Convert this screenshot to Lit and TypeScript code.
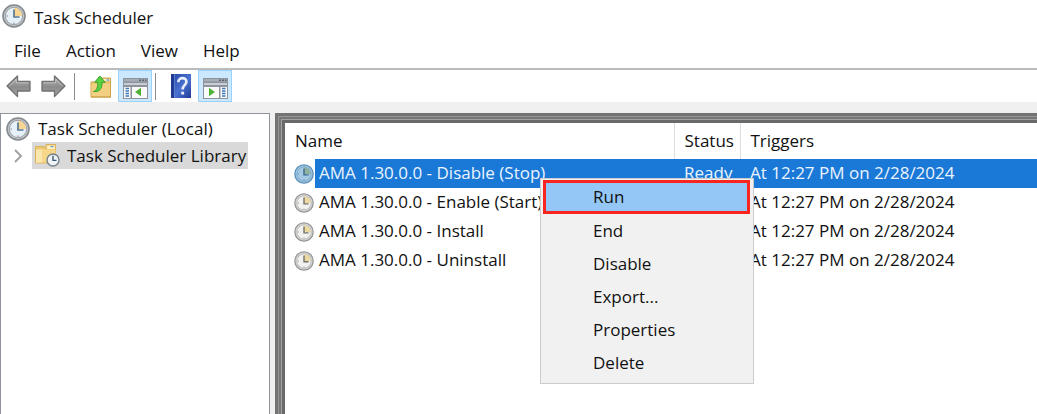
import { LitElement, html, css, svg } from "lit";
import { customElement, property, state } from "lit/decorators.js";
import { classMap } from "lit/directives/class-map.js";

interface Task {
  name: string;
  status: string;
  trigger: string;
}

const TASKS: Task[] = [
  { name: "AMA 1.30.0.0 - Disable (Stop)", status: "Ready", trigger: "At 12:27 PM on 2/28/2024" },
  { name: "AMA 1.30.0.0 - Enable (Start)", status: "Ready", trigger: "At 12:27 PM on 2/28/2024" },
  { name: "AMA 1.30.0.0 - Install", status: "Ready", trigger: "At 12:27 PM on 2/28/2024" },
  { name: "AMA 1.30.0.0 - Uninstall", status: "Ready", trigger: "At 12:27 PM on 2/28/2024" },
];

const COMMANDS = ["Run", "End", "Disable", "Export...", "Properties", "Delete"];

/* Round clock face with the first quarter filled in. */
@customElement("clock-icon")
export class ClockIcon extends LitElement {
  @property({ type: Boolean }) selected = false;
  @property({ type: Boolean }) soft = false;

  static styles = css`
    :host { display: block; }
    svg { display: block; width: 100%; height: 100%; }
  `;

  render() {
    const rim = this.selected ? "#5d8fb5" : this.soft ? "#979797" : "#858a8f";
    const ring = this.selected ? "#a5cdea" : this.soft ? "#dedede" : "#c3c6c8";
    const face = this.selected ? "#a3c9e4" : this.soft ? "#f1f1ef" : "#e6f0f9";
    const quarter = this.selected ? "#8fb29f" : this.soft ? "#ead9a0" : "#f7d593";
    const hand = this.selected ? "#3c6c90" : this.soft ? "#77716a" : "#5b7893";
    return html`<svg viewBox="0 0 24 24" aria-hidden="true">
      <circle cx="12" cy="12" r="11" fill=${ring} stroke=${rim} stroke-width="1.6"></circle>
      <circle cx="12" cy="12" r="8.6" fill=${face} stroke=${rim} stroke-width="0.7"></circle>
      <path d="M12 12V3.8A8.2 8.2 0 0 1 20.2 12Z" fill=${quarter}></path>
      <path d="M12 5.5V13H17.5" fill="none" stroke=${hand} stroke-width="1.7"></path>
      <path d="M12 18.5v1.5M4.5 12H6" stroke=${rim} stroke-width="1"></path>
    </svg>`;
  }
}

const arrow = svg`
  <defs><linearGradient id="steel" x1="0" y1="0" x2="0" y2="1">
    <stop offset="0" stop-color="#b4b4b4"></stop><stop offset="0.55" stop-color="#8b8b8b"></stop><stop offset="1" stop-color="#a9a9a9"></stop>
  </linearGradient></defs>
  <path d="M1 12 11.5 2V7.5H24V17H11.5V22.5Z" fill="url(#steel)" stroke="#707070" stroke-width="1.3" stroke-linejoin="round"></path>
  <path d="M3.5 11.8 10.3 5.3V8.8H22.7" fill="none" stroke="#c9c9c9" stroke-width="0.8"></path>`;

const backIcon = html`<svg width="25" height="24" viewBox="0 0 25 24" aria-hidden="true">${arrow}</svg>`;
const forwardIcon = html`<svg width="25" height="24" viewBox="0 0 25 24" aria-hidden="true"><g transform="translate(25 0) scale(-1 1)">${arrow}</g></svg>`;

const folderUpIcon = html`<svg width="22" height="24" viewBox="0 0 22 24" aria-hidden="true">
  <path d="M1 8H9L11 5V4H20.5V23H1Z" fill="#e8c36f" stroke="#cfa34b" stroke-width="1"></path>
  <path d="M12.5 5H19.5V7H12.5Z" fill="#fff3cf"></path><path d="M16.5 5.3h2.5v1.4h-2.5z" fill="#5b9bd0"></path>
  <path d="M1.5 9.5H20V22.5H1.5Z" fill="#f3d081"></path>
  <path d="M1 23H21" stroke="#c79a42"></path>
  <path d="M3.5 17.5C7 16.5 7.8 13 7.8 8.2H4.8L9.8 2 15.2 8.2H12C12.5 14 9.5 18.5 3.5 17.5Z" fill="#58d143" stroke="#35a32a" stroke-width="1" stroke-linejoin="round"></path>
</svg>`;

/* Console window with a side list; the arrow points towards the tree or the action side. */
const paneIcon = (right: boolean) => html`<svg width="25" height="21" viewBox="0 0 25 21" aria-hidden="true">
  <path d="M0 0H25V21H0Z" fill="#8d949e"></path>
  <path d="M1 1H24V3.5H1Z" fill="#a6adb7"></path>
  <path d="M16 1.5h2v1.5h-2zM19 1.5h2v1.5h-2zM22 1.5h1.5v1.5H22z" fill="#5c6470"></path>
  <path d="M1 5H24V7H1Z" fill="#c9ced5"></path>
  ${right
    ? html`<svg x="0" y="0" width="25" height="21"><path d="M1 9H16V20H1ZM17.5 9H24V20H17.5Z" fill="#fafafa"></path><path d="M6 9.8V18.2L12 14Z" fill="#4fb236"></path><path d="M19 10.5h3.5M19 13h3.5M19 15.5h3.5M19 18h3.5" stroke="#3e78b8" stroke-width="1.3"></path></svg>`
    : html`<svg x="0" y="0" width="25" height="21"><path d="M1 9H7.5V20H1ZM9 9H24V20H9Z" fill="#fafafa"></path><path d="M18 9.8V18.2L12 14Z" fill="#4fb236"></path><path d="M2.5 10.5H6M2.5 13H6M2.5 15.5H6M2.5 18H6" stroke="#3e78b8" stroke-width="1.3"></path></svg>`}
</svg>`;

const helpIcon = html`<svg width="20" height="24" viewBox="0 0 20 24" aria-hidden="true">
  <defs><linearGradient id="book" x1="0" y1="0" x2="1" y2="1">
    <stop offset="0" stop-color="#2445a4"></stop><stop offset="0.55" stop-color="#4a72d0"></stop><stop offset="1" stop-color="#1f3a94"></stop>
  </linearGradient></defs>
  <path d="M0 0H20V24H0Z" fill="url(#book)"></path>
  <path d="M0 0H3V24H0Z" fill="#203c92"></path><path d="M3.5 0V24" stroke="#6485d4" stroke-width="0.8"></path>
  <path d="M7.3 8.2C7.3 2.8 15.6 2.8 15.4 8 15.2 11.2 11.6 11.2 11.6 15.4" fill="none" stroke="#e8eefb" stroke-width="2.6"></path>
  <path d="M10.2 17.7h2.9v2.8h-2.9z" fill="#e8eefb"></path>
</svg>`;

const libraryIcon = html`<svg width="25" height="23" viewBox="0 0 25 23" aria-hidden="true">
  <path d="M0.5 2.5H9L11 5V0.5H20.5V19H0.5Z" fill="#ecc873" stroke="#dab25a"></path>
  <path d="M12 1.5H20V5H12Z" fill="#fff1c4"></path><path d="M15.5 2h3v1.2h-3z" fill="#5b9bd0"></path>
  <path d="M1 5.5H20.5V18.5H1Z" fill="#f7d88b"></path>
  <path d="M1 5.5H7V18.5H1Z" fill="#fbe6ae"></path>
  <circle cx="18" cy="16" r="6" fill="#eef3f6" stroke="#75828a" stroke-width="1.4"></circle>
  <path d="M18 11.8V16.4H21.5" fill="none" stroke="#3c5870" stroke-width="1.4"></path>
</svg>`;

@customElement("app-root")
export class AppRoot extends LitElement {
  @state() private selected = 0;

  static styles = css`
    :host {
      display: flex;
      flex-direction: column;
      min-height: 100vh;
      box-sizing: border-box;
      background: #f0f0f0;
      color: #111;
      font: 17px/24px "Open Sans", "Noto Sans", sans-serif;
    }
    * { box-sizing: border-box; }
    button { font: inherit; color: inherit; border: 0; background: none; padding: 0; margin: 0; }
    svg { display: block; }

    .title { display: flex; align-items: center; gap: 8px; height: 36px; padding: 0 2px; background: #fff; }
    .title clock-icon { width: 24px; height: 24px; margin-bottom: 4px; }
    h1 { font: inherit; margin: 0; }
    .menubar { display: flex; gap: 25px; height: 32px; align-items: center; padding: 0 14px 2px; background: #fff; }
    .toolbar {
      display: flex; align-items: center; height: 34px; padding-left: 6px;
      background: #fff; border-top: 2px solid #bcbcbc;
    }
    .tool { display: flex; align-items: center; justify-content: center; width: 34px; height: 32px; }
    .arrow { width: 25px; margin-right: 10px; }
    .on { background: #cce8ff; border: 1px solid #99d1ff; padding-top: 5px; }
    .rule { width: 1px; height: 27px; background: #8c8c8c; }
    .rule.first { margin: 0 8px 0 -2px; }
    .rule.second { margin: 0 7px 0 3px; }
    .up, .help { width: 35px; }

    .panes { flex: 1; display: grid; grid-template-columns: minmax(160px, 270px) 1fr; gap: 5px; padding-top: 11px; }
    .tree { border: 1px solid #8f939b; border-bottom: 0; background: #fff; padding-top: 1px; }
    .tree ul { list-style: none; margin: 0; padding: 0; }
    .node { display: flex; align-items: center; height: 27px; white-space: nowrap; }
    .root { gap: 8px; padding-left: 5px; }
    .root clock-icon { width: 24px; height: 24px; }
    .branch { padding-left: 11px; gap: 8px; }
    .pick { display: flex; align-items: center; gap: 7px; height: 27px; padding: 0 2px 0 3px; background: #d9d9d9; }

    .list {
      background: #fff; min-width: 0;
      border: 3px solid #747474; border-right: 0; border-bottom: 0;
      box-shadow: inset 1px 1px #979797, inset 3px 3px #777, inset 4px 4px #a2a2a2, inset 7px 7px #696969;
      padding: 7px 0 0 7px;
    }
    table { width: 100%; border-collapse: collapse; table-layout: fixed; }
    th { height: 36px; padding: 0 10px; text-align: left; font-weight: 400; border-right: 1px solid #dedede; }
    th:last-child { border-right: 0; }
    .c-name { width: 389px; }
    .c-status { width: 66px; }
    td { height: 29px; padding: 0 0 1px 10px; white-space: nowrap; }
    td.name { padding: 0; }
    .cell { display: grid; grid-template-columns: 20px 1fr; gap: 1px; padding-left: 9px; align-items: center; }
    .cell clock-icon { width: 20px; height: 20px; }
    .label { height: 29px; line-height: 28px; padding-left: 4px; }
    .active .label, .active td:not(.name) { background: #1a78d6; color: #eaf4ff; }

    .context {
      position: absolute; left: 540px; top: 178px; width: 214px;
      padding: 1px 2px 4px; border: 1px solid #ccc; background: #f1f1f1;
    }
    .context button { display: block; width: 100%; height: 33px; padding-left: 50px; text-align: left; }
    .context button.run { width: 207px; height: 34px; padding-left: 47px; border: 3px solid #f9261f; background: #94c7f6; }
  `;

  render() {
    return html`
      <header class="title"><clock-icon></clock-icon><h1>Task Scheduler</h1></header>
      <nav class="menubar">
        ${["File", "Action", "View", "Help"].map((m) => html`<button>${m}</button>`)}
      </nav>
      <div class="toolbar">
        <button class="tool arrow" aria-label="Back">${backIcon}</button>
        <button class="tool arrow" aria-label="Forward">${forwardIcon}</button>
        <div class="rule first"></div>
        <button class="tool up" aria-label="Up one level">${folderUpIcon}</button>
        <button class="tool on" aria-label="Show console tree">${paneIcon(false)}</button>
        <div class="rule second"></div>
        <button class="tool help" aria-label="Help topics">${helpIcon}</button>
        <button class="tool on" aria-label="Show action pane">${paneIcon(true)}</button>
      </div>
      <main class="panes">
        <nav class="tree">
          <ul>
            <li class="node root"><clock-icon></clock-icon>Task Scheduler (Local)</li>
            <li class="node branch">
              <svg width="12" height="14" viewBox="0 0 12 14" aria-hidden="true"><path d="M3 1 9 7 3 13" fill="none" stroke="#a3a3a3" stroke-width="2"></path></svg>
              <button class="pick">${libraryIcon}Task Scheduler Library</button>
            </li>
          </ul>
        </nav>
        <section class="list">
          <table>
            <colgroup><col class="c-name" /><col class="c-status" /><col /></colgroup>
            <thead><tr><th>Name</th><th>Status</th><th>Triggers</th></tr></thead>
            <tbody>
              ${TASKS.map((t, i) => html`
                <tr class=${classMap({ active: i === this.selected })} @click=${() => (this.selected = i)}>
                  <td class="name"><div class="cell">
                    <clock-icon soft ?selected=${i === this.selected}></clock-icon><span class="label">${t.name}</span>
                  </div></td>
                  <td>${t.status}</td>
                  <td>${t.trigger}</td>
                </tr>`)}
            </tbody>
          </table>
        </section>
      </main>
      <div class="context" role="menu">
        ${COMMANDS.map((c, i) => html`<button role="menuitem" class=${classMap({ run: i === 0 })}>${c}</button>`)}
      </div>
    `;
  }
}
